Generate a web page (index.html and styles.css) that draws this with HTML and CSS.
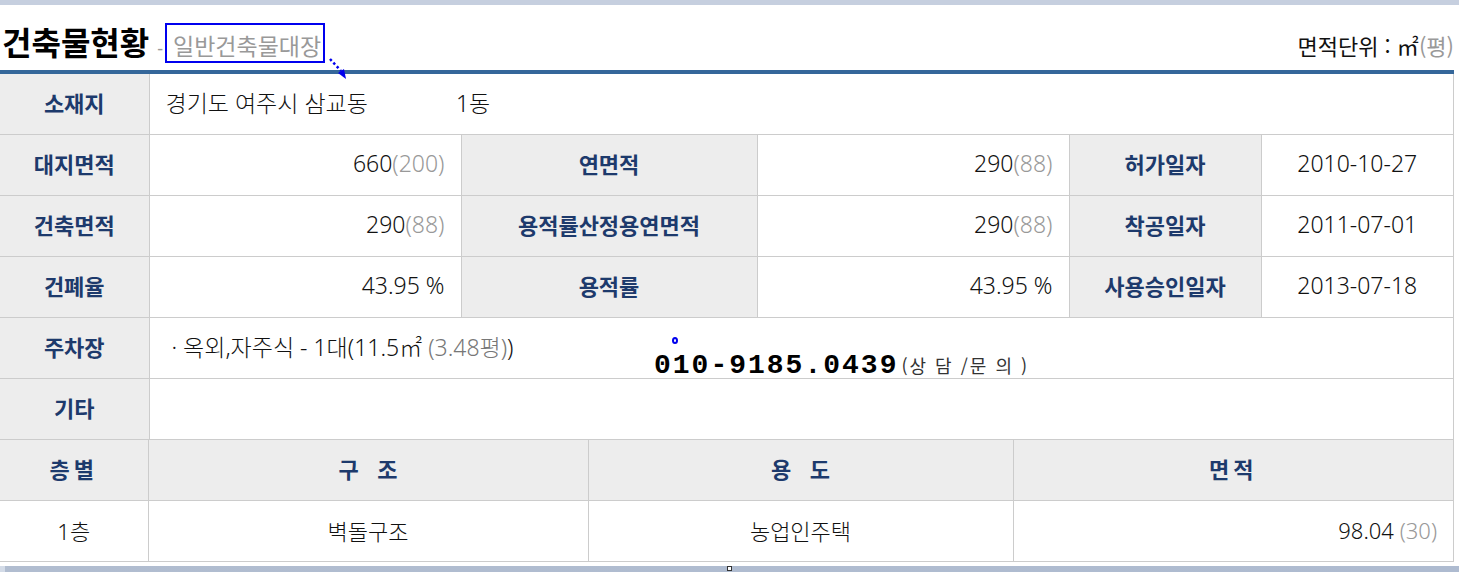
FILE: index.html
```html
<!DOCTYPE html>
<html lang="ko-KR">
<head>
    <meta charset="UTF-8">
    <meta name="viewport" content="width=device-width, initial-scale=1.0">
    <title>건축물현황</title>
    <link rel="stylesheet" href="styles.css">
</head>
<body>
    <div class="band-top"></div>

    <div class="bld-head">
        <h2 class="bld-title">건축물현황</h2>
        <span class="bld-dash">-</span>
        <span class="bld-sub">일반건축물대장</span>
        <!-- 표시 화살표 -->
        <svg class="mark-arrow" width="22" height="24" viewBox="0 0 22 24">
            <line x1="2" y1="2" x2="13" y2="14" stroke="#0000ee" stroke-width="2.5" stroke-dasharray="2.5 2.5"/>
            <polygon points="10,16 18,22 16,12" fill="#0000ee"/>
        </svg>
        <span class="bld-unit">면적단위 : ㎡<em>(평)</em></span>
    </div>

    <div class="bld-wrap">
        <table class="tbl-info">
            <colgroup>
                <col style="width:149px">
                <col style="width:312px">
                <col style="width:296px">
                <col style="width:312px">
                <col style="width:192px">
                <col>
            </colgroup>
            <tr>
                <th>소재지</th>
                <td colspan="5" class="left">경기도 여주시 삼교동<span class="gap"></span>1동</td>
            </tr>
            <tr>
                <th>대지면적</th>
                <td class="num">660<em>(200)</em></td>
                <th>연면적</th>
                <td class="num">290<em>(88)</em></td>
                <th>허가일자</th>
                <td>2010-10-27</td>
            </tr>
            <tr>
                <th>건축면적</th>
                <td class="num">290<em>(88)</em></td>
                <th>용적률산정용연면적</th>
                <td class="num">290<em>(88)</em></td>
                <th>착공일자</th>
                <td>2011-07-01</td>
            </tr>
            <tr>
                <th>건폐율</th>
                <td class="num">43.95 %</td>
                <th>용적률</th>
                <td class="num">43.95 %</td>
                <th>사용승인일자</th>
                <td>2013-07-18</td>
            </tr>
            <tr>
                <th>주차장</th>
                <td colspan="5" class="left park">· 옥외,자주식 - 1대(11.5㎡ <em>(3.48평)</em>)</td>
            </tr>
            <tr>
                <th>기타</th>
                <td colspan="5" class="left"></td>
            </tr>
        </table>

        <table class="tbl-floor">
            <colgroup>
                <col style="width:148px">
                <col style="width:440px">
                <col style="width:425px">
                <col>
            </colgroup>
            <tr>
                <th class="sp1">층별</th>
                <th>구&nbsp;&nbsp;&nbsp;조</th>
                <th>용&nbsp;&nbsp;&nbsp;도</th>
                <th class="sp1">면적</th>
            </tr>
            <tr>
                <td class="thin">1층</td>
                <td class="thin">벽돌구조</td>
                <td class="thin">농업인주택</td>
                <td class="num thin">98.04 <em>(30)</em></td>
            </tr>
        </table>

        <!-- 상담 전화 -->
        <span class="dot-mark"></span>
        <p class="phone">010-9185.0439<small>(상 담 /문 의 )</small></p>
    </div>

    <div class="band-bottom"><span class="tick"></span></div>
</body>
</html>
```

FILE: styles.css
```css
* {
    box-sizing: border-box;
}

body {
    margin: 0;
    width: 1459px;
    height: 572px;
    overflow: hidden;
    font-family: "Noto Sans", "Noto Sans CJK KR", sans-serif;
    color: #111;
    background: #fff;
}

em {
    font-style: normal;
    color: #999;
}

.band-top {
    height: 5px;
    background-color: #c6cfdf;
}

.bld-head {
    position: relative;
    display: flex;
    align-items: baseline;
    width: 1454px;
    height: 69px;
    padding: 13px 0 0 2px;
    border-bottom: 4px solid #35679a;
}

.bld-title {
    margin: 0;
    font-family: "Noto Sans CJK KR", sans-serif;
    font-size: 32px;
    font-weight: 700;
    color: #000;
}

.bld-dash {
    margin-left: 8px;
    font-size: 18px;
    color: #999;
}

.bld-sub {
    margin-left: 2px;
    padding: 6px 2px 2px 6px;
    border: 2px solid #0000ee;
    font-family: "Noto Sans CJK KR", sans-serif;
    font-size: 23px;
    line-height: 28px;
    color: #999;
}

.mark-arrow {
    position: absolute;
    left: 328px;
    top: 52px;
}

.bld-unit {
    margin-left: auto;
    font-family: "Noto Sans CJK KR", sans-serif;
    font-size: 22px;
    color: #111;
}

.bld-wrap {
    position: relative;
}

.bld-wrap table {
    width: 1454px;
    border-collapse: collapse;
    table-layout: fixed;
}

.bld-wrap th,
.bld-wrap td {
    height: 61px;
    padding: 0 16px 3px;
    border: 1px solid #ccc;
    font-size: 23px;
    font-weight: 300;
    text-align: center;
    white-space: nowrap;
}

.bld-wrap tr > :first-child {
    border-left: none;
}

.tbl-info tr:first-child > * {
    border-top: none;
    height: 60px;
}

.bld-wrap th {
    background-color: #ededed;
    color: #1d3a6c;
    font-family: "Noto Sans CJK KR", sans-serif;
    font-size: 22px;
    font-weight: 700;
}

.bld-wrap td.num {
    text-align: right;
}

.bld-wrap td.left {
    text-align: left;
}

.bld-wrap td.park {
    padding-left: 22px;
}

.park em {
    color: #777;
}

.gap {
    display: inline-block;
    width: 88px;
}

.tbl-floor tr:first-child > * {
    border-top: none;
}

.bld-wrap th.sp1 {
    letter-spacing: 4px;
}

.bld-wrap td.thin {
    font-size: 22px;
}

.dot-mark {
    position: absolute;
    left: 672px;
    top: 263px;
    width: 6px;
    height: 7px;
    border: 2px solid #0000ee;
    border-radius: 50%;
}

.phone {
    position: absolute;
    left: 654px;
    top: 276px;
    margin: 0;
    font-family: "Liberation Mono", monospace;
    font-size: 28px;
    font-weight: 700;
    letter-spacing: 2px;
    color: #000;
}

.phone small {
    margin-left: 3px;
    font-family: "Noto Sans CJK KR", sans-serif;
    font-size: 18px;
    font-weight: 400;
    letter-spacing: 2px;
    color: #333;
}

.band-bottom {
    position: relative;
    height: 7px;
    margin-top: 4px;
    background: linear-gradient(to right, #d3dbe7 0, #d3dbe7 5px, #b1bdd0 5px, #aebbd0 100%);
}

.tick {
    position: absolute;
    left: 727px;
    top: 0;
    width: 5px;
    height: 5px;
    border: 1px solid #333;
    background: #fff;
}
```
